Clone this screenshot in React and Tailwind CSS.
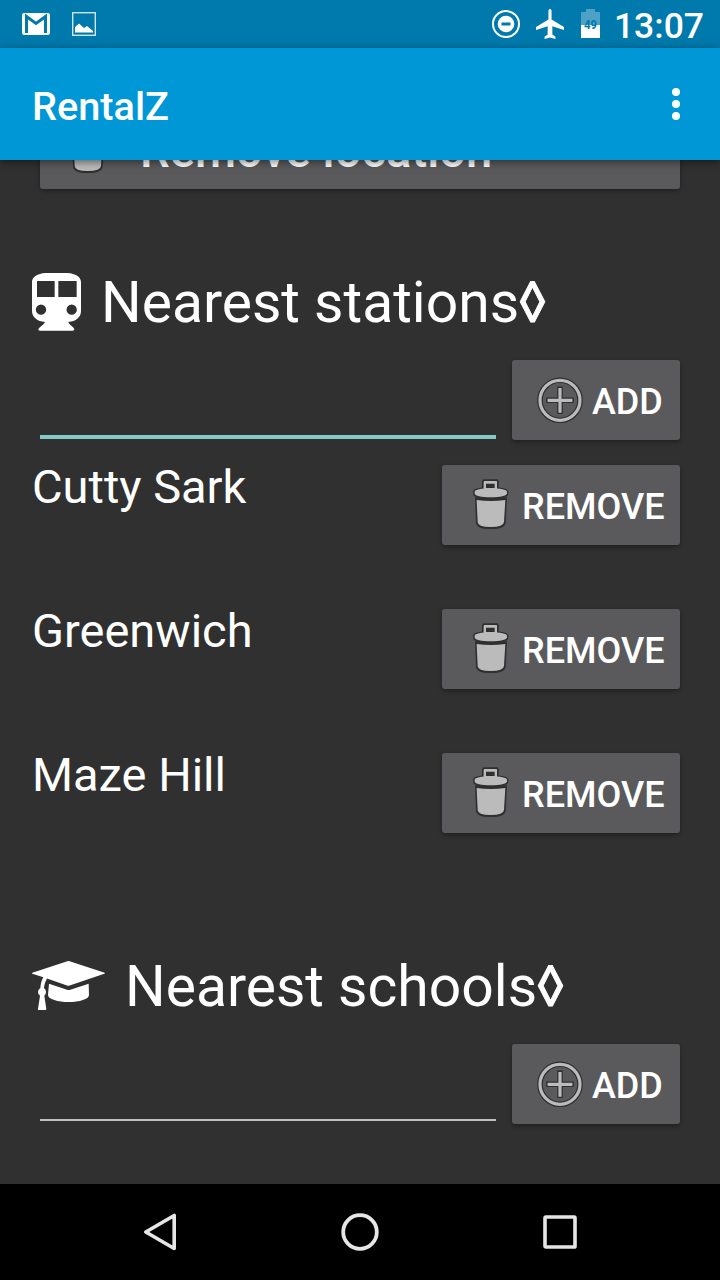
function TrashIcon({ className }) {
  return (
    <svg className={className} width="36" height="51" viewBox="128 417 108 153">
      <g fill="#2f2f2f">
        <path d="M155 448V424Q155 418 161 418H199Q205 418 205 424V448Z" />
        <path d="M128.500 454C129 446 150 441 181 441S233 446 234 454V461C234 472 210 477 181 477S128.500 472 128.500 461Z" />
        <path d="M134 472H230L226 548Q224 567 181 567T137 548Z" />
      </g>
      <g fill="#bbbbbb">
        <path fillRule="evenodd" d="M160 448V425Q160 423 162 423H198Q200 423 200 425V448ZM167 444H193V431H167Z" />
        <path d="M133 455C134 449 152 445 181 445S229 449 230 455V460C229 468 210 472 181 472S133 468 133 460Z" />
        <path d="M139 480Q181 486 225 480L221 546Q220 561 181 561T142 546Z" />
      </g>
      <path d="M169 434H191V443H169Z" fill="#2f2f2f" />
    </svg>
  );
}

function PlusIcon() {
  return (
    <svg className="shrink-0" width="46" height="46" viewBox="0 0 46 46" fill="none">
      <circle cx="23" cy="23.300" r="20" stroke="#2f2f2f" strokeWidth="5.600" />
      <circle cx="23" cy="23.300" r="20" stroke="#bbbbbb" strokeWidth="3.200" />
      <path d="M23 9.500V37M9.200 23.300H36.800" stroke="#2f2f2f" strokeWidth="5.600" strokeLinejoin="round" />
      <path d="M23 10.900V35.700M10.600 23.300H35.400" stroke="#bbbbbb" strokeWidth="3.200" />
    </svg>
  );
}

function TrainIcon() {
  return (
    <svg className="mb-[2px] shrink-0" width="49" height="58" viewBox="36 369 147 174" fill="#fff">
      <path
        fillRule="evenodd"
        d="M76 369H143C166 371 183 380 183 397V483C183 502 168 514 145 516C147 524 162 531 163 538Q163 542 158 542H60Q54 542 55 538C58 531 72 524 75 516C52 514 36 502 36 483V397C36 380 53 371 76 369ZM51 393V441H104V393ZM115 393V441H170V393ZM63 463.500A15.500 15.500 0 1 0 63 494.500A15.500 15.500 0 1 0 63 463.500ZM155 463.500A15.500 15.500 0 1 0 155 494.500A15.500 15.500 0 1 0 155 463.500Z"
      />
    </svg>
  );
}

function CapIcon() {
  return (
    <svg className="mb-[2px] shrink-0" width="73" height="50" viewBox="36 63 219 150" fill="#fff">
      <path d="M37 98L142 63.500Q145 62.500 149 63.500L254 98Q256 100 253 101L149 136.500Q145 138 141 136.500L81 115.500C77 123 73 133 72 144Q78 149 78 156Q78 163 73 167L79 207Q79 210 76 210H56Q53 210 54 207L60 167Q54 163 54 156Q54 148 61 144C62 131 65 120 70 112L37 101Q35 100 37 98Z" />
      <path d="M87 131L141 149Q146 151 151 149L206 131L207 165C207 178 178 186 146 186S84 178 84 165Z" />
    </svg>
  );
}

function StatusBar() {
  return (
    <header className="flex h-12 shrink-0 items-center bg-[#0079ac] pl-[22px] pr-4">
      <svg width="28" height="24" viewBox="0 0 28 24">
        <rect y="1" width="28" height="22" rx="2.200" fill="#fff" />
        <path d="M4.500 21V4.500L14 11.500L23.500 4.500V21" fill="none" stroke="#0079ac" strokeWidth="3" />
      </svg>
      <svg className="ml-[22px]" width="24" height="24" viewBox="0 0 24 24">
        <rect x="0.700" y="0.700" width="22.600" height="22.600" fill="none" stroke="#cfe6f0" strokeWidth="1.400" />
        <path d="M3 20.500V15L7 11.500L12 16L15 14L21 19V20.500Z" fill="#fff" />
      </svg>
      <div className="ml-auto flex items-center">
        <svg width="28" height="28" viewBox="0 0 28 28">
          <circle cx="14" cy="14" r="13" fill="none" stroke="#fff" strokeWidth="2" />
          <circle cx="14" cy="14" r="8.300" fill="#fff" />
          <rect x="9.500" y="12.500" width="9" height="3" fill="#0079ac" />
        </svg>
        <svg className="ml-4" width="28" height="30" viewBox="3 2 18 20" preserveAspectRatio="none" fill="#fff">
          <path d="M21 16v-2l-8-5V3.500C13 2.670 12.670 2 12 2s-1 .67-1 1.500V9l-8 5v2l7.500-2.500V19L8.500 20.500V22l3.500-1 3.500 1v-1.500L13.500 19v-5.500L21 16z" />
        </svg>
        <svg className="ml-[17px]" width="19" height="30" viewBox="0 0 19 30">
          <path d="M5 0H14V3H19V29H0V3H5Z" fill="#4da1c5" />
          <path d="M0 16H19V29H0Z" fill="#fff" />
          <text x="9.500" y="20" textAnchor="middle" fontSize="13.500" fontWeight="700" textLength="13" lengthAdjust="spacingAndGlyphs" fill="#0079ac">49</text>
        </svg>
        <span className="ml-[14px] pt-[5px] text-[35.5px] leading-[47px] font-medium">13:07</span>
      </div>
    </header>
  );
}

function Button({ children, className }) {
  return (
    <button className={`flex h-20 shrink-0 items-center rounded-[3px] bg-[#5a5a5c] text-[36px] leading-[42px] font-medium shadow-[0_2px_4px_rgba(0,0,0,0.35)] ${className}`}>
      {children}
    </button>
  );
}

function SectionHeading({ icon, title }) {
  return (
    <h2 className="flex h-[66px] items-center gap-5 text-[57px] leading-[66px] font-normal whitespace-nowrap">
      {icon}
      <span>
        {title}
        <span className="inline-block origin-left scale-x-[0.94] [-webkit-text-stroke:0.8px_white]">◊</span>
      </span>
    </h2>
  );
}

function AddRow({ focused }) {
  return (
    <div className="mt-6 flex h-20 gap-4 px-2">
      <div className={focused ? "mb-px flex-1 border-b-4 border-[#80cbc4]" : "mb-[3px] flex-1 border-b-2 border-[#c1c1c1]"} />
      <Button className="w-[168px] gap-[9px] pl-[25px]">
        <PlusIcon />
        <span className="pt-[3px]">ADD</span>
      </Button>
    </div>
  );
}

const stations = ["Cutty Sark", "Greenwich", "Maze Hill"];

export default function App() {
  return (
    <div className="flex h-[1280px] w-[720px] flex-col overflow-hidden bg-[#303030] font-['Roboto',sans-serif] text-white">
      <StatusBar />
      <div className="z-10 flex h-28 shrink-0 items-center justify-between bg-[#0097d6] pl-8 pr-10 shadow-[0_2px_8px_rgba(0,0,0,0.5)]">
        <h1 className="pt-[5px] text-[39.7px] leading-[49px] font-medium">RentalZ</h1>
        <svg width="8" height="32" viewBox="0 0 8 32" fill="#fff">
          <circle cx="4" cy="4" r="4" />
          <circle cx="4" cy="16" r="4" />
          <circle cx="4" cy="28" r="4" />
        </svg>
      </div>
      <main className="h-[1024px] shrink-0 overflow-hidden px-8">
        <div className="-mt-[51px] px-2">
          <Button className="w-full pl-[30px]">
            <TrashIcon className="mb-[2px] shrink-0" />
            <span className="ml-[34px] pt-1 text-[47.2px]">Remove location</span>
          </Button>
        </div>
        <section className="mt-[81px]">
          <SectionHeading icon={<TrainIcon />} title="Nearest stations" />
          <AddRow focused />
          <ul className="mt-[25px] flex flex-col gap-16">
            {stations.map((name) => (
              <li key={name} className="flex h-20 items-start justify-between pr-2">
                <span className="-mt-[6px] text-[47px] leading-[56px]">{name}</span>
                <Button className="w-[238px] pl-[30.5px]">
                  <TrashIcon className="mb-[2px] shrink-0" />
                  <span className="ml-[13.5px] pt-[3px]">REMOVE</span>
                </Button>
              </li>
            ))}
          </ul>
        </section>
        <section className="mt-[121px]">
          <SectionHeading icon={<CapIcon />} title="Nearest schools" />
          <AddRow />
        </section>
      </main>
      <nav className="flex h-24 shrink-0 items-center justify-between bg-black px-[140px]">
        <svg width="40" height="40" viewBox="0 0 40 40" fill="none" stroke="#e6e6e6" strokeWidth="3.600" strokeLinejoin="round">
          <path d="M5.800 20L34.200 3.500V36.500Z" />
        </svg>
        <svg width="40" height="40" viewBox="0 0 40 40" fill="none" stroke="#e6e6e6" strokeWidth="3.800">
          <circle cx="20" cy="20" r="16.800" />
        </svg>
        <svg width="40" height="40" viewBox="0 0 40 40" fill="none" stroke="#e6e6e6" strokeWidth="3.600">
          <rect x="5" y="5" width="30" height="30" rx="0.800" />
        </svg>
      </nav>
    </div>
  );
}
